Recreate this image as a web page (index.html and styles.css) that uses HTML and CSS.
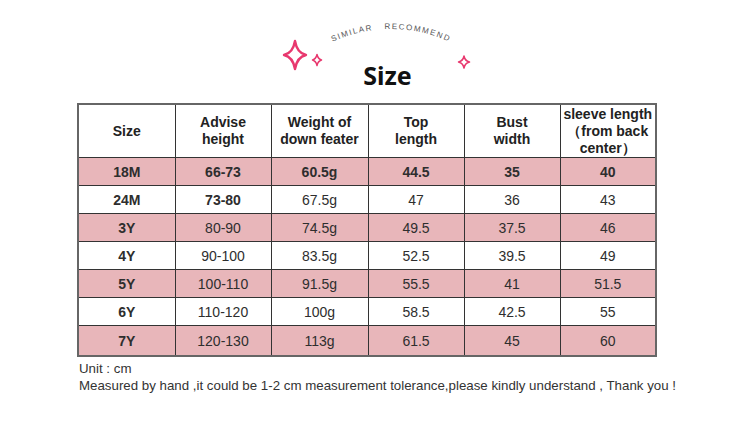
FILE: index.html
```html
<!DOCTYPE html>
<html>
<head>
<meta charset="utf-8">
<link rel="stylesheet" href="styles.css">
</head>
<body>
<header class="head">
  <svg class="decor" width="750" height="104" viewBox="0 0 750 104">
    <defs>
      <path id="arc" d="M 316 50.8 A 140 140 0 0 1 466 50.8"/>
    </defs>
    <text class="arc-text"><textPath href="#arc" startOffset="50%" text-anchor="middle" xml:space="preserve">SIMILAR   RECOMMEND</textPath></text>
    <g fill="none" stroke="#e8386e" stroke-width="2.4" stroke-linejoin="round">
      <path d="M295 41 Q297 53 306 55 Q297 57 295 69 Q293 57 284 55 Q293 53 295 41 Z"/>
    </g>
    <g fill="none" stroke="#e8386e" stroke-width="1.5" stroke-linejoin="round">
      <path d="M317 54.5 Q318 59 321.5 60 Q318 61 317 65.5 Q316 61 312.5 60 Q316 59 317 54.5 Z"/>
      <path d="M464 56 Q465 61 469.5 62 Q465 63 464 68 Q463 63 458.5 62 Q463 61 464 56 Z"/>
    </g>
  </svg>
  <h1 class="title">Size</h1>
</header>
<table class="size-table">
  <colgroup>
    <col class="c1"><col class="c2"><col class="c3"><col class="c4"><col class="c5"><col class="c6">
  </colgroup>
  <thead>
    <tr>
      <th>Size</th>
      <th>Advise<br>height</th>
      <th>Weight of<br>down feater</th>
      <th>Top<br>length</th>
      <th>Bust<br>width</th>
      <th>sleeve length<br>（from back<br>center）</th>
    </tr>
  </thead>
  <tbody>
    <tr class="pink bold"><td>18M</td><td>66-73</td><td>60.5g</td><td>44.5</td><td>35</td><td>40</td></tr>
    <tr><td class="b">24M</td><td class="b">73-80</td><td>67.5g</td><td>47</td><td>36</td><td>43</td></tr>
    <tr class="pink"><td class="b">3Y</td><td>80-90</td><td>74.5g</td><td>49.5</td><td>37.5</td><td>46</td></tr>
    <tr><td class="b">4Y</td><td>90-100</td><td>83.5g</td><td>52.5</td><td>39.5</td><td>49</td></tr>
    <tr class="pink"><td class="b">5Y</td><td>100-110</td><td>91.5g</td><td>55.5</td><td>41</td><td>51.5</td></tr>
    <tr><td class="b">6Y</td><td>110-120</td><td>100g</td><td>58.5</td><td>42.5</td><td>55</td></tr>
    <tr class="pink"><td class="b">7Y</td><td>120-130</td><td>113g</td><td>61.5</td><td>45</td><td>60</td></tr>
  </tbody>
</table>
<div class="notes">
  <p>Unit : cm</p>
  <p>Measured by hand ,it could be 1-2 cm measurement tolerance,please kindly understand , Thank you !</p>
</div>
</body>
</html>
```

FILE: styles.css
```css
html, body {
  margin: 0;
  padding: 0;
  background: #ffffff;
}
body {
  width: 750px;
  height: 446px;
  overflow: hidden;
  font-family: "Liberation Sans", Arial, sans-serif;
  color: #222;
}
.head {
  position: relative;
  height: 103px;
}
.decor {
  position: absolute;
  left: 0;
  top: 0;
}
.arc-text {
  font-family: "Liberation Sans", Arial, sans-serif;
  font-size: 8px;
  letter-spacing: 1.5px;
  fill: #555;
}
.title {
  position: relative;
  margin: 0;
  padding-top: 60px;
  padding-left: 25px;
  text-align: center;
  font-family: "Noto Sans", sans-serif;
  font-weight: 700;
  font-size: 25px;
  line-height: 30px;
  color: #111;
}
.size-table {
  margin-left: 77px;
  border-collapse: collapse;
  border: 2px solid #666;
  table-layout: fixed;
  width: 578px;
  font-size: 14px;
}
.c1 { width: 97px; }
.c2 { width: 96px; }
.c3 { width: 97px; }
.c4 { width: 96px; }
.c5 { width: 96px; }
.c6 { width: 96px; }
.size-table th,
.size-table td {
  border: 1px solid #333;
  text-align: center;
  vertical-align: middle;
  padding: 0;
}
.size-table th {
  height: 52px;
  font-weight: 700;
  line-height: 17px;
  color: #222;
}
.size-table td {
  height: 27px;
  color: #2e2e2e;
  line-height: 16px;
}
.size-table tbody tr:last-child td {
  height: 29px;
}
.pink td {
  background: #e8b6ba;
}
.bold td,
.size-table td.b {
  font-weight: 700;
}
.notes {
  margin-left: 79px;
  margin-top: 3px;
  font-size: 13.3px;
  line-height: 17px;
  color: #333;
}
.notes p {
  margin: 0;
}
```
